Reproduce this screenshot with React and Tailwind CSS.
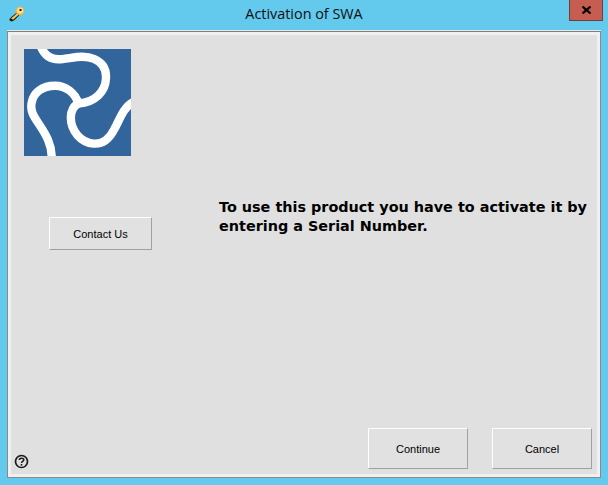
export default function App() {
  const btn = "flex items-center justify-center bg-[#e1e1e1] border border-t-white border-l-white border-b-[#a0a0a0] border-r-[#a0a0a0] text-black font-['Liberation_Sans',sans-serif] text-[11px] pt-[1px]";
  return (
    <div className="w-[608px] h-[485px] bg-[#63c9ed] flex flex-col overflow-hidden">
      <div className="relative h-[30px] shrink-0 flex items-center justify-center">
        <svg className="absolute left-[9px] top-[6px]" width="16" height="16" viewBox="0 0 16 16">
          <path d="M0.5 14 L2 15.5 L4 15 L6 13.5 L11 8.5 L8.5 6 L3 10.5 L0.5 13 Z" fill="#1a1408" />
          <path d="M2 12.5 L9 6.5 L10.5 8 L4 13.8 Z" fill="#f6c95a" />
          <circle cx="11" cy="5" r="4.4" fill="#eeb644" />
          <circle cx="11.2" cy="4.6" r="3" fill="#fde28e" />
          <rect x="10.5" y="3" width="2" height="2" fill="#1a1408" />
        </svg>
        <span className="font-['Open_Sans',sans-serif] text-[14.4px] text-[#101010] pb-[3px]">Activation of SWA</span>
        <div className="absolute left-[569px] top-0 w-[34px] h-[21px] bg-[#c75c50] border border-t-0 border-[#6e3f3f] flex items-center justify-center">
          <svg width="9" height="8" viewBox="0 0 9 8">
            <path d="M0.5 0.5 L8.5 7.5 M8.5 0.5 L0.5 7.5" stroke="#000" strokeWidth="2.2" />
          </svg>
        </div>
      </div>
      <div className="ml-[7px] w-[594px] h-[448px] border-t border-t-[#e8e8e8]">
        <div className="w-[594px] h-[447px] border border-[#8a8a8a] border-t-[#808080] bg-[#f0f0f0] p-[3px]">
          <div className="w-full h-full bg-[#e0e0e0] flex">
            <div className="w-[208px] shrink-0 flex flex-col pl-[13px] pt-[14px]">
              <svg className="block shrink-0" width="107" height="107" viewBox="0 0 320 320">
                <rect width="320" height="320" fill="#31659b" />
                <g fill="none" stroke="#fff" strokeWidth="25">
                  <path d="M50 -8 C62 22 85 34 115 30 C150 26 180 17 210 30 C238 42 247 65 245 90 C243 125 215 160 163 163" />
                  <path d="M83 330 C84 285 65 255 45 225 C28 200 18 185 23 160 C28 130 55 110 93 110 C125 110 152 130 163 163" />
                  <path d="M328 158 C295 175 285 215 270 240 C255 270 235 285 208 283 C170 280 140 245 140 205 C140 185 150 168 163 163" />
                </g>
              </svg>
              <button className={btn + " w-[103px] h-[33px] ml-[25px] mt-[61px]"}>Contact Us</button>
              <svg className="mt-auto mb-[5px] ml-[-10px] shrink-0" width="15" height="15" viewBox="0 0 15 15">
                <circle cx="7.5" cy="7.5" r="6" fill="none" stroke="#1a1a1a" strokeWidth="1.7" />
                <path d="M5.3 6 C5.3 3.5 9.8 3.5 9.8 6 C9.8 7.5 7.5 7.4 7.5 9" fill="none" stroke="#1a1a1a" strokeWidth="1.5" />
                <rect x="6.7" y="10" width="1.6" height="1.6" fill="#1a1a1a" />
              </svg>
            </div>
            <div className="flex-1 min-w-0 flex flex-col">
              <p className="mt-[163px] font-['DejaVu_Sans',sans-serif] font-bold text-[14.4px] leading-[19px] text-black whitespace-nowrap">
                To use this product you have to activate it by<br />entering a Serial Number.
              </p>
              <div className="mt-auto mb-[5px] flex justify-end gap-[24px] pr-[5px]">
                <button className={btn + " w-[100px] h-[41px]"}>Continue</button>
                <button className={btn + " w-[100px] h-[41px]"}>Cancel</button>
              </div>
            </div>
          </div>
        </div>
      </div>
    </div>
  );
}
